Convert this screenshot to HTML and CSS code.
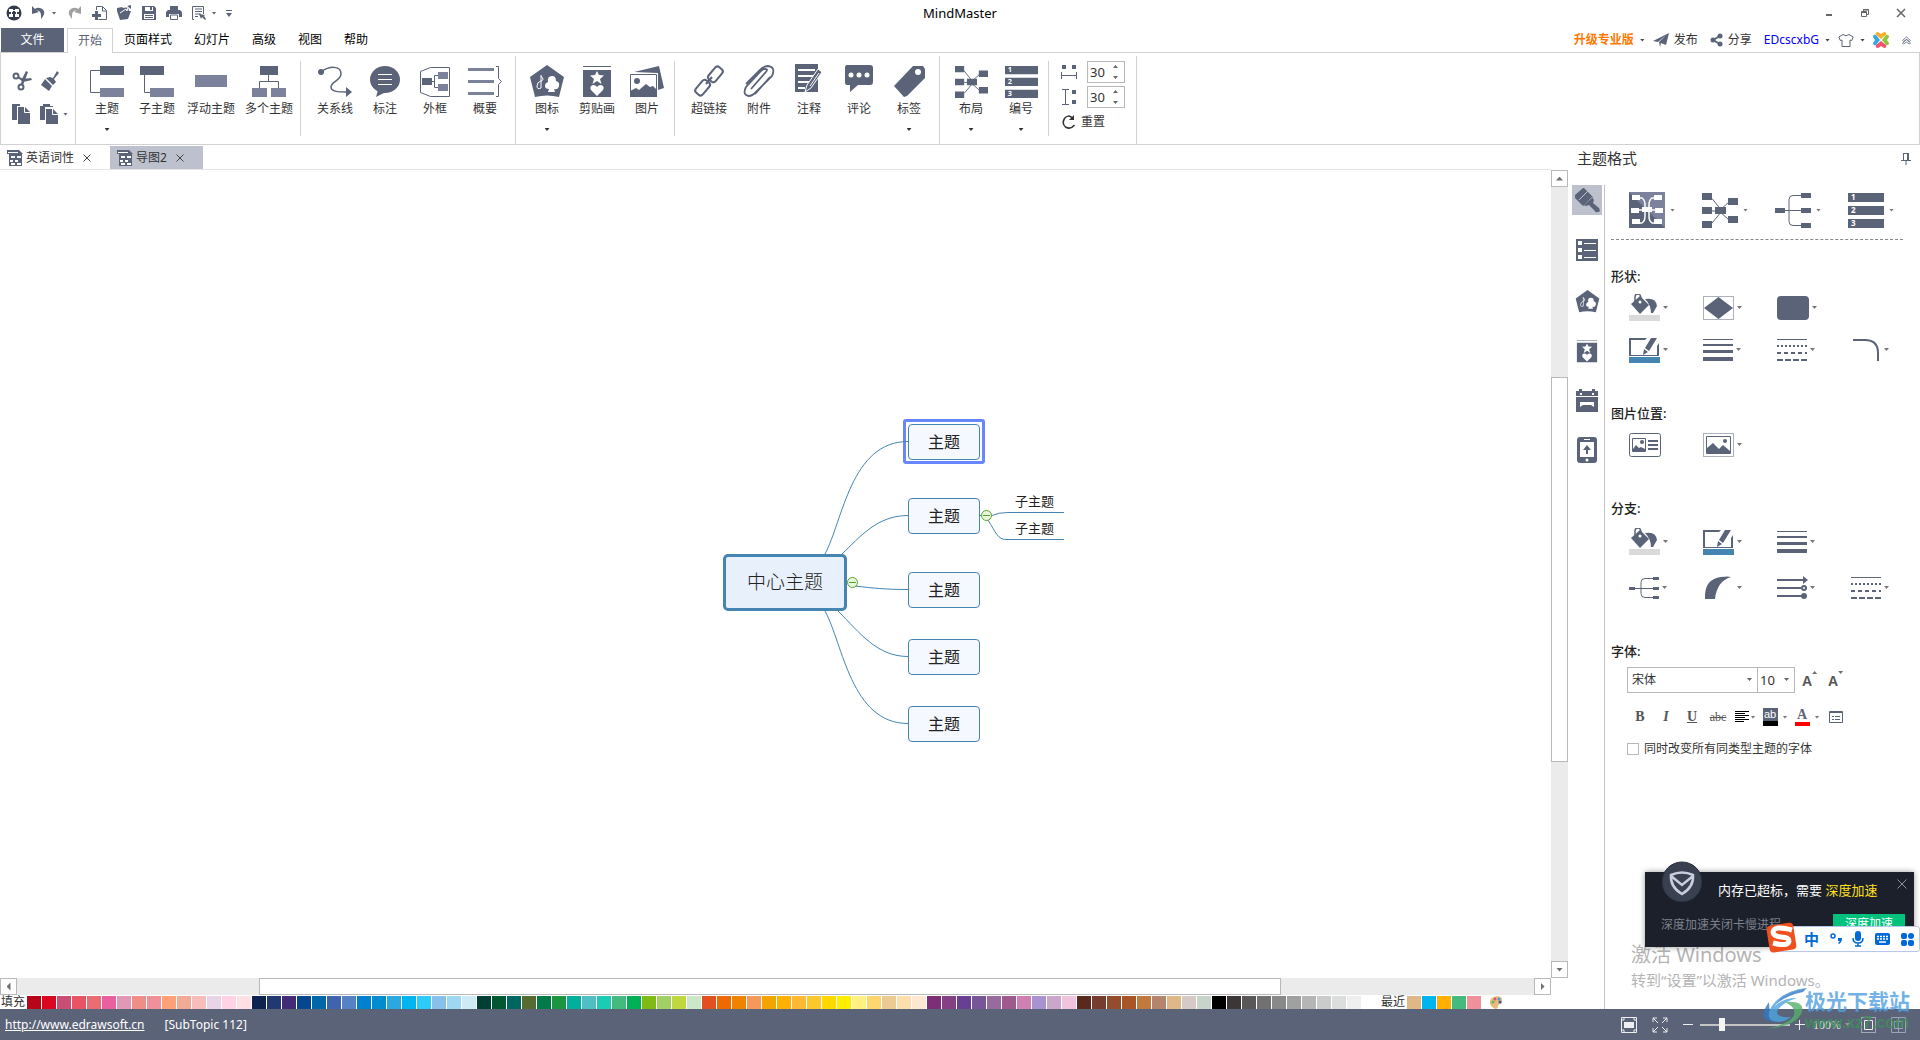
FILE: index.html
```html
<!DOCTYPE html>
<html lang="zh-CN">
<head>
<meta charset="utf-8">
<title>MindMaster</title>
<link rel="stylesheet" href="styles.css">
</head>
<body>
<svg class="defs" aria-hidden="true">
  <symbol id="layout" viewBox="0 0 36 36"><path d="M10 6.500L20 19M10 19h10M10 31L20 19M27 10L17 19M27 28L17 19" fill="none" stroke="currentColor"/><path d="M0 1h10v7H0zM0 15h10v7H0zM0 29h10v7H0zM26 6h10v7H26zM26 24h10v7H26zM13 15h11v7H13z"/></symbol>
  <symbol id="number" viewBox="0 0 36 36"><path d="M0 1h36v9H0zM0 14h36v9H0zM0 27h36v9H0z"/><g fill="#fff" font-size="8" font-weight="700"><text x="3" y="8">1</text><text x="3" y="21">2</text><text x="3" y="34">3</text></g></symbol>
  <symbol id="badge" viewBox="0 0 36 36"><path d="M18 3L35 15L30 35Q18 32 6 35L1 15z"/><path d="M12 13v13q-4 2-4-2 0-4 4-5t0-5" fill="none" stroke="#fff"/><path d="M23 14q4 0 4 5 4 1 3 5t-5 3l1 3h-7l1-3q-4 0-4-3t3-4q-1-6 4-6z" fill="#fff"/></symbol>
  <symbol id="clipart" viewBox="0 0 36 36"><path d="M4 4h28v1H4zM4 8h28v27H4z"/><path d="M18 9l2 4 5 .5-4 3.500 1.500 5L18 19l-4.500 3 1.500-5-4-3.500 5-.5zM18 34l-6-6q-2-4 2-5 3 0 4 2 1-2 4-2 4 1 2 5z" fill="#fff"/></symbol>
  <symbol id="bucket" viewBox="0 0 31 27"><path d="M2 10L11 2l9 9-9 9z"/><path d="M6 7V3q0-3 3-3t3 5v4" fill="none" stroke="currentColor" stroke-width="1.500"/><circle cx="11" cy="8" r="1.500" fill="#fff"/><path d="M16 5q11-2 12 7l-4 7-2 0q0-8-6-14z"/><path d="M0 21h31v6H0z" fill="#dadada"/></symbol>
  <symbol id="pen" viewBox="0 0 31 26"><path d="M0 1h18l-2 2H2v15h26V9l2-3v13H0z"/><path d="M22 1h6l-8 13-4-3zM15 12l4 3-5 3z"/><path d="M0 20h31v6H0z" fill="#4585b2"/></symbol>
  <symbol id="weights" viewBox="0 0 30 24"><path d="M0 1h30v1H0zM0 6h30v2H0zM0 12h30v3H0zM0 19h30v4H0z"/></symbol>
  <symbol id="dashes" viewBox="0 0 30 24"><path d="M0 1h30v1H0z"/><path d="M0 8h30" stroke="currentColor" stroke-width="2" stroke-dasharray="2"/><path d="M0 15h30" stroke="currentColor" stroke-width="2" stroke-dasharray="4 3"/><path d="M0 22h30" stroke="currentColor" stroke-width="2" stroke-dasharray="6 2"/></symbol>
  <symbol id="branch" viewBox="0 0 36 36"><path d="M0 18.500h30M26 3.500H18q-4 0-4 4v22q0 4 4 4h8" fill="none" stroke="currentColor"/><path d="M0 16h10v5H0zM26 1h10v5H26zM26 16h10v5H26zM26 31h10v5H26z"/></symbol>
  <symbol id="doc" viewBox="0 0 16 16"><path d="M0 0h12v4H0zM2 4h13v12H2zM12 0l4 4h-4z"/><path d="M1 2h10v1H1zM4 6h4v2H4zM10 6h4v2h-4zM3 10h3v2H3zM8 10h3v2H8zM4 13h4v2H4zM10 13h4v2h-4z" fill="#fff"/></symbol>
</svg>

<header class="titlebar">
  <div class="quick">
    <button class="tool w16" aria-label="MindMaster"><svg width="16" height="16"><circle cx="8" cy="8" r="7.500" fill="#353b4c"/><path d="M3 4h4v3H3zM9 4h4v3H9zM3 9h4v3H3zM9 9h4v3H9zM5 7h1v2H5zM10 7h1v2h-1zM7 5h2v1H7z" fill="#fff"/></svg></button>
    <button class="tool w16" aria-label="撤销"><svg width="16" height="16"><path d="M1 1v8l7-2-2.500-1.500Q11 5 10 14q7-8-1-11Q6 2 4 4z"/></svg></button>
    <button class="tool w8" aria-label="撤销列表"><i class="caret"></i></button>
    <button class="tool w16 off" aria-label="重做"><svg width="16" height="16"><path d="M15 1v8L8 7l2.500-1.500Q5 5 6 14-1 6 7 3q3-1 5 1z"/></svg></button>
    <button class="tool w16" aria-label="新建"><svg width="16" height="16"><path d="M5.500 5V1.500h6l4 4v9h-8M11.500 2v4h4" fill="none" stroke="currentColor"/><path d="M4 6h3v3h3v3H7v3H4v-3H1V9h3z"/></svg></button>
    <button class="tool w16" aria-label="打开"><svg width="16" height="16"><path d="M1 3l5-1 1 1 5-1 1 4 2 0-3 8-8 1L1 6zM11 1l4-1v4z"/><path d="M4 8l6-4 1 2 1-4-4-.5" fill="none" stroke="#fff"/></svg></button>
    <button class="tool w16" aria-label="保存"><svg width="16" height="16"><path d="M1 1h12l2 2v12H1z"/><path d="M4 2h8v4H4zM3 9h10v5H3z" fill="#fff"/><path d="M9 2h2v3H9zM4 10h8v1H4zM4 12h8v1H4z"/></svg></button>
    <button class="tool w16" aria-label="打印"><svg width="16" height="16"><path d="M4 1h8v4h2l2 2v5h-3V9H3v3H0V7l2-2h2z"/><path d="M4.500 10h7v4.500h-7z" fill="#fff" stroke="currentColor"/></svg></button>
    <button class="tool w16" aria-label="导出"><svg width="16" height="16"><path d="M3 14.500H1.500v-13h11V9M4 4h7M4 6.500h7M4 9h6M4 11.500h3" fill="none" stroke="currentColor"/><path d="M8 9l6 1-1 1 2 3-1 1-3-3-1 2z"/></svg></button>
    <button class="tool w8" aria-label="导出列表"><i class="caret"></i></button>
    <button class="tool" aria-label="自定义"><svg width="6" height="7"><path d="M0 0h6v1H0zM0 3h6L3 7z"/></svg></button>
  </div>
  <h1>MindMaster</h1>
  <div class="window">
    <button aria-label="最小化"><svg width="10" height="10"><path d="M2 6h6v2H2z"/></svg></button>
    <button aria-label="还原"><svg width="10" height="10"><path d="M3.500 3V1.500h5v5H7M1.500 3.500h5v5h-5zM1 4.500h6M3 2h6" fill="none" stroke="currentColor"/></svg></button>
    <button aria-label="关闭"><svg width="10" height="10"><path d="M1 1l8 8M9 1l-8 8" stroke="currentColor" stroke-width="1.500"/></svg></button>
  </div>
</header>

<nav class="menubar">
  <button class="file">文件</button>
  <button class="tab active">开始</button>
  <button class="tab">页面样式</button>
  <button class="tab">幻灯片</button>
  <button class="tab">高级</button>
  <button class="tab">视图</button>
  <button class="tab">帮助</button>
  <div class="account">
    <button class="upgrade">升级专业版</button><i class="caret"></i>
    <button><svg width="16" height="16"><path d="M0 9L16 1l-3 12-5-2-1 4-1-5 7-7-8 7z"/></svg>发布</button>
    <button><svg width="13" height="14"><path d="M10 3L3 7l7 4" fill="none" stroke="currentColor" stroke-width="2"/><circle cx="10" cy="3" r="2.500"/><circle cx="3" cy="7" r="2.500"/><circle cx="10" cy="11" r="2.500"/></svg>分享</button>
    <a href="#account">EDcscxbG</a><i class="caret"></i>
    <button aria-label="皮肤"><svg width="16" height="14"><path d="M5 1.500L.8 4l1.500 3.500L4 7v6.500h8V7l1.700.5L15.200 4 11 1.500Q8 4 5 1.500z" fill="none" stroke="currentColor"/></svg></button><i class="caret"></i>
    <button aria-label="社区"><svg width="16" height="16"><path d="M8 7L3 3Q2 0 5 0l3 2 3-2q3 0 2 3z" fill="#fbb02d"/><path d="M9 8l4-5q3-1 3 2l-2 3 2 3q0 3-3 2z" fill="#8cc63f"/><path d="M8 9l5 4q1 3-2 3l-3-2-3 2q-3 0-2-3z" fill="#f4506c"/><path d="M7 8L3 3Q0 2 0 5l2 3-2 3q0 3 3 2z" fill="#35a8e0"/></svg></button>
    <button aria-label="收起功能区"><svg width="11" height="9"><path d="M1.500 4.500l4-3.500 4 3.500-1 1-3-2-3 2zM1.500 7l4-3.500 4 3.500-1 1-3-2-3 2z" fill="none" stroke="currentColor" stroke-width=".8"/></svg></button>
  </div>
</nav>

<section class="ribbon">
  <div class="group clip">
    <button class="tool" aria-label="剪切"><svg width="20" height="20"><circle cx="4" cy="5" r="2.500" fill="none" stroke="currentColor" stroke-width="2"/><circle cx="9" cy="16" r="2.500" fill="none" stroke="currentColor" stroke-width="2"/><path d="M6 5l5 3 8-1 1 2-9 2-5-4zM9 13l1-5 4-8 2 1-3 8-2 5z"/></svg></button>
    <button class="tool" aria-label="格式刷"><svg width="20" height="20"><path d="M17 0l2 2-5 6 2 3-3 3-7-7 4-1 3 1zM5 8l7 7-3 5-8-6z"/></svg></button>
    <button class="tool" aria-label="复制"><svg width="20" height="20"><path d="M0 0h8v2H5v14H0z"/><path d="M6 3h7l5 5v12H6z"/><path d="M12.500 3v5.500H18" fill="none" stroke="#fff"/></svg></button>
    <button class="tool paste" aria-label="粘贴"><svg width="20" height="20"><path d="M0 2h3V0h7v2h3v1H5v13H0z"/><path d="M6 5h7l5 5v10H6z"/><path d="M12.500 5v5.500H18" fill="none" stroke="#fff"/></svg><i class="caret"></i></button>
  </div>
  <div class="group tight">
    <button class="cmd"><svg viewBox="0 0 36 36"><path d="M11 8.500H1.500v22H11" fill="none" stroke="currentColor"/><path d="M11 4h24v9H11z"/><path class="lt" d="M11 26h24v9H11z"/></svg>主题<i class="caret"></i></button>
    <button class="cmd"><svg viewBox="0 0 36 36"><path d="M5.500 13v17.500H11" fill="none" stroke="currentColor"/><path d="M1 4h24v9H1z"/><path class="lt" d="M11 26h24v9H11z"/></svg>子主题</button>
    <button class="cmd wide"><svg viewBox="0 0 36 36"><path class="lt" d="M2 13h32v12H2z"/></svg>浮动主题</button>
    <button class="cmd wide"><svg viewBox="0 0 36 36"><path d="M17.500 13v6M8.500 26v-6.500h19V26" fill="none" stroke="currentColor"/><path d="M9 4h18v9H9z"/><path class="lt" d="M1 26h15v9H1zM20 26h15v9H20z"/></svg>多个主题</button>
  </div>
  <i class="rule"></i>
  <div class="group end">
    <button class="cmd"><svg viewBox="0 0 36 36"><path d="M4 10C12 4 24 3 24 12 24 18 14 20 14 25 14 30 22 30 30 30" fill="none" stroke="currentColor" stroke-width="1.500"/><circle cx="4" cy="10" r="3"/><path d="M29 25l6 5-6 5z"/></svg>关系线</button>
    <button class="cmd"><svg viewBox="0 0 36 36"><ellipse cx="18" cy="17.500" rx="15" ry="13.500"/><path d="M11 28L9 35l12-6z"/><path d="M11 12.500h14M11 17.500h14M11 22.500h14" stroke="#fff"/></svg>标注</button>
    <button class="cmd"><svg viewBox="0 0 36 36"><path d="M3.500 9.500l10-4h19v29h-19l-10-4zM14 19.500h3.500M21 13.500h-3.500v12H21" fill="none" stroke="currentColor"/><path d="M5 16h10v7H5z"/><path class="lt" d="M21 10h10v7H21zM21 22h10v7H21z"/></svg>外框</button>
    <button class="cmd"><svg viewBox="0 0 36 36"><path class="lt" d="M1 6h26v3H1zM1 18h26v3H1zM1 30h26v3H1z"/><path d="M29 4.500h2.500v12l3 3-3 3v12H29" fill="none" stroke="currentColor"/></svg>概要</button>
  </div>
  <div class="group tight">
    <button class="cmd"><svg><use href="#badge"/></svg>图标<i class="caret"></i></button>
    <button class="cmd"><svg><use href="#clipart"/></svg>剪贴画</button>
    <button class="cmd"><svg viewBox="0 0 36 36"><path d="M5 10l25-6 5 22-6 2V11z"/><path d="M1.500 12.500h26v22h-26z" fill="#fff" stroke="currentColor"/><path d="M1 29l6-3 3 2 7-6 4 3 3-1 4 4v7H1z"/><circle cx="8" cy="19" r="3"/></svg>图片</button>
  </div>
  <i class="rule"></i>
  <div class="group end">
    <button class="cmd"><svg viewBox="0 0 36 36"><g fill="none" stroke="currentColor" stroke-width="2"><rect x="-8" y="-4" width="16" height="9" rx="3" transform="translate(24 12) rotate(-50)"/><rect x="-8" y="-5" width="16" height="9" rx="3" transform="translate(12 26) rotate(-50)"/><path d="M15 22l6-7"/></g></svg>超链接</button>
    <button class="cmd"><svg viewBox="0 0 36 36"><path d="M10 27L24 11q4-4 0-4-2 0-4 2L5 25q-4 8 3 9 3 0 7-4L31 14q4-9-4-10-4 0-8 4L5 22M14 32L29 15" fill="none" stroke="currentColor" stroke-width="1.800"/></svg>附件</button>
    <button class="cmd"><svg viewBox="0 0 36 36"><path d="M4 2h23v28H4z"/><path d="M7 8h17M7 14h15M7 20h11M7 26h7" stroke="#fff" stroke-width="2"/><path d="M27 7l4 3-11 16-6 4 2-7z" stroke="#fff"/><path d="M19 24l9-13" stroke="#fff"/></svg>注释</button>
    <button class="cmd"><svg viewBox="0 0 36 36"><path d="M6 3h23q3 0 3 3v14q0 3-3 3H17l-8 7v-7H6q-2 0-2-3V6q0-3 2-3z"/><g fill="#fff"><circle cx="10" cy="13" r="2.500"/><circle cx="18" cy="13" r="2.500"/><circle cx="26" cy="13" r="2.500"/></g></svg>评论</button>
    <button class="cmd"><svg viewBox="0 0 36 36"><path d="M22 4h10l2 3v9L16 34l-3 1L3 24z"/><circle cx="27" cy="10" r="3" fill="#fff"/></svg>标签<i class="caret"></i></button>
  </div>
  <div class="group tight">
    <button class="cmd"><svg class="inset"><use href="#layout"/></svg>布局<i class="caret"></i></button>
    <button class="cmd"><svg class="inset"><use href="#number"/></svg>编号<i class="caret"></i></button>
  </div>
  <i class="rule"></i>
  <div class="group spacing">
    <label class="spin"><svg width="16" height="16"><path d="M1 1h4v4H1zM11 1h4v4h-4z"/><path d="M.5 8v7M15.500 8v7M1 11.500h14" stroke="currentColor"/></svg><span class="box"><input type="text" value="30" aria-label="水平间距"></span></label>
    <label class="spin"><svg width="16" height="16"><path d="M1 .5h7M1 15.500h7M4.500 1v14" stroke="currentColor"/><path d="M11 1h4v4h-4zM11 11h4v4h-4z"/></svg><span class="box"><input type="text" value="30" aria-label="垂直间距"></span></label>
    <button class="reset"><svg width="16" height="16"><path d="M11.500 4Q7 0 3.500 4.500q-3 5 1 8.500 5 3 9-2" fill="none" stroke="currentColor" stroke-width="1.500"/><path d="M13 1v5H8z"/></svg>重置</button>
  </div>
</section>

<main class="workspace">
  <div class="editor">
    <div class="doctabs">
      <div class="doctab"><svg width="16" height="16"><use href="#doc"/></svg>英语词性<button aria-label="关闭 英语词性"><svg width="8" height="8"><path d="M.5.5l7 7M7.500.5l-7 7" stroke="currentColor"/></svg></button></div>
      <div class="doctab active"><svg width="16" height="16"><use href="#doc"/></svg>导图2<button aria-label="关闭 导图2"><svg width="8" height="8"><path d="M.5.5l7 7M7.500.5l-7 7" stroke="currentColor"/></svg></button></div>
    </div>
    <div class="stage">
      <div class="canvas">
        <div class="map">
          <div class="selection"></div>
          <svg class="links" width="345" height="325" viewBox="722 419 345 325"><g fill="none" stroke="#4585b2"><path d="M825 554C843 520 851 441.500 908 441.500M842 554C860 537 877 515.500 908 515.500M855 586C872 588 885 589.500 908 589.500M838 611C860 633 877 656.500 908 656.500M825 611C843 644 851 723.500 908 723.500M980 515.500H992Q998 512.500 1008 512.500H1064M988 520C996 533 998 539.500 1006 539.500H1064"/></g><g fill="#e9f7df" stroke="#57a52b"><circle cx="986.500" cy="515.500" r="5"/><circle cx="852.500" cy="582.500" r="5"/><path d="M983 515.500h7M849 582.500h7"/></g></svg>
          <div class="node root">中心主题</div>
          <div class="node n1">主题</div>
          <div class="node n2">主题</div>
          <div class="node n3">主题</div>
          <div class="node n4">主题</div>
          <div class="node n5">主题</div>
          <div class="sub s1">子主题</div>
          <div class="sub s2">子主题</div>
        </div>
      </div>
      <div class="vscroll"><button aria-label="向上"><i class="up"></i></button><div class="vtrack"><div class="vthumb"></div></div><button aria-label="向下"><i class="down"></i></button></div>
    </div>
    <div class="hscroll"><button aria-label="向左"><i class="left"></i></button><div class="htrack"><div class="hthumb"></div></div><button aria-label="向右"><i class="right"></i></button></div>
    <div class="palette">
      <span class="name">填充</span>
      <div class="swatches">
        <i style="background:#b80618"></i><i style="background:#db0720"></i><i style="background:#c84e74"></i><i style="background:#e95464"></i><i style="background:#ec6d71"></i><i style="background:#ea609e"></i><i style="background:#e198b4"></i><i style="background:#ee8e87"></i><i style="background:#f0909a"></i><i style="background:#ffa078"></i><i style="background:#f0aa96"></i><i style="background:#f6bdbb"></i><i style="background:#e8d4e6"></i><i style="background:#ffd3e4"></i><i style="background:#ffdfe4"></i>
        <i style="background:#0e2350"></i><i style="background:#213970"></i><i style="background:#422c78"></i><i style="background:#06468e"></i><i style="background:#0068a8"></i><i style="background:#3f63af"></i><i style="background:#5482c4"></i><i style="background:#0081d0"></i><i style="background:#008cd0"></i><i style="background:#2ca8e0"></i><i style="background:#00b4f0"></i><i style="background:#2ecafa"></i><i style="background:#88c0ec"></i><i style="background:#9ed8f0"></i><i style="background:#ceeaf5"></i>
        <i style="background:#004034"></i><i style="background:#005830"></i><i style="background:#006662"></i><i style="background:#556b2f"></i><i style="background:#007a46"></i><i style="background:#1c9440"></i><i style="background:#00b09c"></i><i style="background:#50bfc3"></i><i style="background:#1accb4"></i><i style="background:#44ba7e"></i><i style="background:#00b054"></i><i style="background:#80ba14"></i><i style="background:#a2d064"></i><i style="background:#bfd840"></i><i style="background:#cce6c8"></i>
        <i style="background:#e24f20"></i><i style="background:#ee6a00"></i><i style="background:#f08200"></i><i style="background:#f6985a"></i><i style="background:#f2a400"></i><i style="background:#ffb000"></i><i style="background:#ffb834"></i><i style="background:#fac82c"></i><i style="background:#ffd800"></i><i style="background:#ffee00"></i><i style="background:#fff280"></i><i style="background:#ffd56e"></i><i style="background:#ebca94"></i><i style="background:#ffdead"></i><i style="background:#fce8d0"></i>
        <i style="background:#7c2f76"></i><i style="background:#854085"></i><i style="background:#693f94"></i><i style="background:#785498"></i><i style="background:#986a9e"></i><i style="background:#a0598c"></i><i style="background:#d07fb2"></i><i style="background:#a992d0"></i><i style="background:#caa6cb"></i><i style="background:#efc4dc"></i>
        <i style="background:#592a1c"></i><i style="background:#773c30"></i><i style="background:#934d2a"></i><i style="background:#a85628"></i><i style="background:#c1793e"></i><i style="background:#b5846c"></i><i style="background:#deb887"></i><i style="background:#d5cac5"></i><i style="background:#c8d4ca"></i>
        <i style="background:#000"></i><i style="background:#3c3637"></i><i style="background:#595757"></i><i style="background:#717171"></i><i style="background:#898989"></i><i style="background:#9fa0a0"></i><i style="background:#b5b5b6"></i><i style="background:#cacccb"></i><i style="background:#dcdddd"></i><i style="background:#efefef"></i>
      </div>
      <span class="name recent">最近</span>
      <div class="swatches"><i style="background:#deb887"></i><i style="background:#00b4f0"></i><i style="background:#ffb000"></i><i style="background:#44ba7e"></i><i style="background:#f0909a"></i></div>
      <button class="more" aria-label="更多颜色"><svg width="14" height="14"><path d="M8 1q6 0 5 6-1 3-3 2l-1 2q0 3-3 3-3-1-5-5Q0 2 8 1z" fill="#e8bd7c"/><circle cx="6" cy="4" r="1.500" fill="#e0526a"/><circle cx="10" cy="4" r="1.500" fill="#3c9edb"/><circle cx="11" cy="7" r="1.500" fill="#3d57a8"/><circle cx="4" cy="7" r="1.500" fill="#5fb760"/></svg></button>
    </div>
  </div>

  <aside class="panel">
    <div class="phead"><h2>主题格式</h2><button aria-label="固定"><svg width="10" height="12"><path d="M2 .5h6M2.500 1v6M6.500 1v6M7.500 1v6M0 7.500h10M5 8v4" stroke="currentColor"/></svg></button></div>
    <div class="pbody">
      <div class="side">
        <button class="active" aria-label="格式"><svg width="26" height="26" viewBox="0 0 26 26"><path d="M9 1L1 8v3l8 8 10-9-9-9zM10 18l8-8 2 3-1 3 6 5q2 4-1 4-3 1-4-2l-5-5-3 1z"/><path d="M14 4l-9 9" stroke="#bdc1cd"/></svg></button>
        <button aria-label="大纲"><svg width="22" height="22"><path d="M0 0h22v22H0z"/><path d="M2 2h4v4H2zM2 9h4v4H2zM2 16h4v4H2zM8 4h12v1H8zM8 11h12v1H8zM8 18h12v1H8z" fill="#fff"/></svg></button>
        <button aria-label="图标"><svg width="25" height="25"><use href="#badge"/></svg></button>
        <button aria-label="剪贴画"><svg width="26" height="26"><use href="#clipart"/></svg></button>
        <button aria-label="日程"><svg width="22" height="23"><path d="M3 0h3v2h10V0h3v2h3v5H0V2h3zM0 8h22v15H0z"/><path d="M4 13h14v5l-3-2H7l-3 2zM4 4h2v2H4zM16 4h2v2h-2z" fill="#fff"/></svg></button>
        <button aria-label="分享"><svg width="20" height="26"><rect width="20" height="26" rx="3"/><path d="M3 5h14v15H3zM7 2h6v1H7z" fill="#fff"/><circle cx="10" cy="23" r="1.500" fill="#fff"/><path d="M10 8l4 5h-3v4H9v-4H6z"/></svg></button>
      </div>
      <div class="props">
        <div class="styles">
          <button><svg width="36" height="36"><path class="lt" d="M0 0h36v36H0z"/><path d="M0 0l18 18 18 18H0z"/><path d="M10 6h3q3 2 3 7v11q0 5-3 7h-3M26 6h-3q-3 2-3 7v11q0 5 3 7h3M4 18h28" fill="none" stroke="#fff" stroke-width="1.500"/><path d="M3 3h8v5H3zM2 16h8v5H2zM3 27h8v5H3zM25 3h8v5h-8zM26 16h8v5h-8zM25 27h8v5h-8zM13 15h10v5H13z" fill="#fff"/></svg><i class="caret"></i></button>
          <button><svg width="36" height="36"><use href="#layout"/></svg><i class="caret"></i></button>
          <button><svg width="36" height="36"><use href="#branch"/></svg><i class="caret"></i></button>
          <button><svg width="36" height="36"><use href="#number"/></svg><i class="caret"></i></button>
        </div>
        <h3>形状:</h3>
        <div class="opts">
          <button><svg width="31" height="27"><use href="#bucket"/></svg><i class="caret"></i></button>
          <button><svg width="31" height="24"><path d="M.5.5h30v23H.5z" fill="none" stroke="currentColor" stroke-dasharray="1 1"/><path d="M1 12L15.500 1 30 12 15.500 23z"/></svg><i class="caret"></i></button>
          <button><svg width="32" height="24"><rect width="32" height="24" rx="4"/></svg><i class="caret"></i></button>
          <span></span>
          <button><svg width="31" height="26"><use href="#pen"/></svg><i class="caret"></i></button>
          <button><svg width="30" height="24"><use href="#weights"/></svg><i class="caret"></i></button>
          <button><svg width="30" height="24"><use href="#dashes"/></svg><i class="caret"></i></button>
          <button><svg width="30" height="24"><path d="M2 2h12q13 0 13 13v8" fill="none" stroke="currentColor" stroke-width="2"/></svg><i class="caret"></i></button>
        </div>
        <h3>图片位置:</h3>
        <div class="opts">
          <button><svg width="32" height="24"><rect x=".5" y=".5" width="31" height="23" rx="2" fill="none" stroke="currentColor"/><path d="M3.500 5.500h13v13h-13z" fill="none" stroke="currentColor"/><path d="M4 16l3-4 3 3 2-1 4 2v2H4zM19 7h10v2H19zM19 11h10v2H19zM19 15h10v2H19z"/><circle cx="13" cy="9" r="2"/></svg></button>
          <button><svg width="31" height="24"><path d="M.5.5h30v23H.5z" fill="none" stroke="currentColor" stroke-dasharray="1 1"/><path d="M3.500 3.500h24v17h-24z" fill="none" stroke="currentColor"/><path d="M4 15l6-5 6 6 4-4 7 6v3H4z"/><circle cx="22" cy="8" r="2"/></svg><i class="caret"></i></button>
        </div>
        <h3>分支:</h3>
        <div class="opts loose">
          <button><svg width="31" height="27"><use href="#bucket"/></svg><i class="caret"></i></button>
          <button><svg width="31" height="26"><use href="#pen"/></svg><i class="caret"></i></button>
          <button><svg width="30" height="24"><use href="#weights"/></svg><i class="caret"></i></button>
          <span></span>
          <button><svg width="30" height="24"><path d="M0 12.500h26M24 2.500h-8q-4 0-4 4v11q0 4 4 4h8" fill="none" stroke="currentColor"/><path d="M0 11h6v3H0zM24 1h6v3h-6zM24 11h6v3h-6zM24 20h6v3h-6z"/></svg><i class="caret"></i></button>
          <button><svg width="31" height="24"><path d="M2 23Q1 3 18 1q7-1 10 0Q14 5 12 23z"/></svg><i class="caret"></i></button>
          <button><svg width="30" height="24"><path d="M0 4h26M0 12h24M0 20h26" stroke="currentColor" stroke-width="2"/><path d="M26 0l5 4-5 4z"/><circle cx="27" cy="12" r="2" fill="#fff" stroke="currentColor" stroke-width="2"/><circle cx="27" cy="20" r="3"/></svg><i class="caret"></i></button>
          <button><svg width="30" height="24"><use href="#dashes"/></svg><i class="caret"></i></button>
        </div>
        <h3>字体:</h3>
        <div class="fontrow">
          <span class="pick family"><select aria-label="字体"><option>宋体</option></select></span>
          <span class="pick size"><select aria-label="字号"><option>10</option></select></span>
          <button class="grow" aria-label="增大字号">A<i class="up"></i></button>
          <button class="grow" aria-label="减小字号">A<i class="down"></i></button>
        </div>
        <div class="fmt">
          <button><b>B</b></button>
          <button><b><em>I</em></b></button>
          <button><b><u>U</u></b></button>
          <button class="strike"><s>abc</s></button>
          <button class="al"><svg width="14" height="12"><path d="M0 .5h14M0 2.500h10M0 4.500h14M0 6.500h10M0 8.500h14M0 10.500h9" stroke="#000"/></svg><i class="caret"></i></button>
          <button class="hl"><span>ab</span><i class="caret"></i></button>
          <button class="fc"><span>A</span><i class="caret"></i></button>
          <button><svg width="14" height="12"><path d="M.5.5h13v11H.5zM1 1.500h12M6 5.500h5M6 8.500h5M3 5.500h2M3 8.500h2" fill="none" stroke="currentColor"/></svg></button>
        </div>
        <label class="check"><input type="checkbox">同时改变所有同类型主题的字体</label>
      </div>
    </div>
  </aside>
</main>

<footer class="status">
  <a href="http://www.edrawsoft.cn">http://www.edrawsoft.cn</a>
  <span class="info">[SubTopic 112]</span>
  <div class="zoom">
    <button aria-label="适合窗口"><svg width="16" height="16"><path d="M.5.500h15v15H.5z" fill="none" stroke="currentColor"/><path d="M3 5h10v6H3z"/><path d="M2 4V2h2M12 2h2v2M14 12v2h-2M4 14H2v-2" fill="none" stroke="currentColor"/></svg></button>
    <button aria-label="全屏"><svg width="16" height="16"><path d="M1 5V1h4M11 1h4v4M15 11v4h-4M5 15H1v-4M1 1l5 5M15 1l-5 5M15 15l-5-5M1 15l5-5" fill="none" stroke="currentColor"/></svg></button>
    <button aria-label="缩小"><svg width="10" height="10"><path d="M0 4h10v1H0z"/></svg></button>
    <input type="range" min="0" max="100" value="23" aria-label="缩放">
    <button aria-label="放大"><svg width="10" height="10"><path d="M0 4h10v1H0zM4 0h1v10H4z"/></svg></button>
    <button class="pct">100%<i class="caret"></i></button>
    <button aria-label="适合页面"><svg width="15" height="16"><path d="M.5.500h14v15H.5z" fill="none" stroke="currentColor" stroke-dasharray="1 1"/><path d="M3.500 3.500h8v9h-8z" fill="none" stroke="currentColor"/></svg></button>
    <button class="dim" aria-label="居中"><svg width="15" height="16"><path d="M.5.500h14v15H.5zM3.500 4.500h8v7h-8zM7.500 1v14" fill="none" stroke="currentColor"/></svg></button>
  </div>
</footer>

<div class="activate"><p class="big">激活 Windows</p><p>转到“设置”以激活 Windows。</p></div>

<div class="toast">
  <svg class="shield" width="42" height="42"><circle cx="21" cy="21" r="20" fill="#39404f" stroke="#252b38"/><path d="M10 14q11-5 22 0 1 12-11 19Q9 26 10 14zM10 15l11 9 11-9" fill="none" stroke="#c9cddd" stroke-width="2.500"/></svg>
  <button class="x" aria-label="关闭提醒"><svg width="10" height="10"><path d="M.5.500l9 9M9.500.500l-9 9" stroke="currentColor"/></svg></button>
  <p class="msg">内存已超标，需要 <em>深度加速</em></p>
  <div class="act"><span>深度加速关闭卡慢进程</span><button>深度加速</button></div>
</div>

<div class="ime">
  <svg class="sogou" width="32" height="32"><rect x="2" y="2" width="27" height="27" rx="4" fill="#f0501e" transform="rotate(-9 16 16)"/><path d="M26 8Q8 3 7 10q0 4 8 5 8 0 8 4-1 6-16 2" fill="none" stroke="#fff" stroke-width="5"/></svg>
  <button>中</button>
  <button aria-label="标点"><svg width="12" height="12"><circle cx="3" cy="3" r="2" fill="none" stroke="currentColor" stroke-width="1.500"/><path d="M8 5h4q0 4-3 6l-1-1 2-2H8z"/></svg></button>
  <button aria-label="语音"><svg width="12" height="16"><rect x="3" width="6" height="10" rx="3"/><path d="M1 7q0 5 5 5t5-5M6 12v3M3 15h6" fill="none" stroke="currentColor" stroke-width="1.500"/></svg></button>
  <button aria-label="键盘"><svg width="15" height="12"><rect width="15" height="12" rx="2"/><path d="M2 3.500h11M2 6h11" stroke="#fff" stroke-width="1.500" stroke-dasharray="2 1"/><path d="M4 9h7" stroke="#fff" stroke-width="1.500"/></svg></button>
  <button aria-label="工具箱"><svg width="13" height="13"><rect width="6" height="6" rx="2"/><rect x="7" width="6" height="6" rx="3"/><rect y="7" width="6" height="6" rx="2"/><rect x="7" y="7" width="6" height="6" rx="2"/></svg></button>
</div>

<div class="brand">
  <svg width="46" height="42"><path d="M44 0Q16 4 9 20 20 8 40 4zM6 14Q-4 28 4 32q8 4 14 0Q6 32 6 14z" fill="#3278c8"/><path d="M44 0Q16 6 12 18q8-8 22-8-18 6-20 14 0 6 14 5-10 8-20 3Q2 26 12 14 24 2 44 0z" fill="#4ea4e0"/><path d="M22 14q22-2 16 12Q32 38 4 41q24-6 27-14 2-8-9-13z" fill="#56b06a"/></svg>
  <div><strong>极光下载站</strong><span>www.xz7.com</span></div>
</div>
</body>
</html>
```
FILE: styles.css
```css
* { box-sizing: border-box; }
body {
  margin: 0; height: 100vh; overflow: hidden; position: relative;
  display: flex; flex-direction: column;
  font: 12px/16px "Noto Sans", "Noto Sans CJK SC", sans-serif;
  color: #333; background: #fff;
}
h1, h2, h3, p { margin: 0; font-size: inherit; font-weight: 400; }
button { border: 0; padding: 0; background: none; font: inherit; color: inherit; }
svg { display: block; fill: currentColor; overflow: visible; flex: none; }
.defs { position: absolute; width: 0; height: 0; }
.lt { fill: #7c829b; }
.caret { flex: none; width: 5px; height: 3px; background: currentColor; clip-path: polygon(0 0, 100% 0, 50% 100%); }
.up, .down { width: 7px; height: 4px; background: #707070; clip-path: polygon(0 0, 100% 0, 50% 100%); }
.up { clip-path: polygon(0 100%, 100% 100%, 50% 0); }
.left, .right { width: 4px; height: 8px; background: #707070; clip-path: polygon(100% 0, 100% 100%, 0 50%); }
.right { clip-path: polygon(0 0, 0 100%, 100% 50%); }

.titlebar { display: grid; grid-template-columns: 1fr auto 1fr; align-items: center; height: 28px; padding-bottom: 2px; color: #000; }
.titlebar h1 { font-size: 13px; }
.quick { display: flex; align-items: center; gap: 9px; padding-left: 6px; color: #5b6378; }
.quick .tool { display: grid; place-items: center; }
.quick .w16 { width: 16px; height: 16px; }
.quick .w8 { width: 6px; height: 16px; margin-left: -5px; }
.quick .off { color: #a0a0a0; }
.window { display: flex; justify-content: flex-end; gap: 26px; padding-right: 14px; color: #666; }

.menubar { display: flex; align-items: flex-end; height: 25px; border-bottom: 1px solid #d2d2d2; color: #000; }
.menubar .file { width: 63px; height: 24px; margin: 0 3px 0 1px; background: #5b6378; color: #fff; }
.tab { height: 24px; padding: 0 11px; }
.tab.active { height: 25px; margin-bottom: -1px; padding: 0 10px; border: 1px solid #d2d2d2; border-bottom: 0; background: #fff; color: #5b6378; }
.account { display: flex; align-items: center; gap: 12px; height: 24px; margin-left: auto; padding-right: 8px; color: #333; }
.account button { display: flex; align-items: center; gap: 5px; }
.account svg { color: #5b6378; }
.account .caret { margin: 0 -4px 0 -6px; color: #444; }
.account .upgrade { color: #ff7800; font-weight: 700; }
.account a { color: #00f; text-decoration: none; }

.ribbon { display: flex; height: 92px; border: 1px solid #d2d2d2; border-top: 0; }
.group { display: flex; margin-top: 3px; padding: 0 0 0 6px; }
.group.end, .clip, .spacing { border-right: 1px solid #d2d2d2; }
.group.end { padding: 0 5px 0 9px; }
.group.tight { padding-right: 2px; }
.rule { width: 1px; margin: 8px 0; background: #d2d2d2; }
.clip { display: grid; grid-template-columns: 28px 34px; grid-template-rows: 20px 20px; align-content: start; row-gap: 13px; width: 75px; padding: 15px 0 0 11px; color: #5b6378; }
.paste { display: flex; align-items: center; gap: 3px; }
.cmd { display: flex; flex-direction: column; align-items: center; width: 50px; padding-top: 6px; color: #333; }
.cmd.wide { width: 58px; }
.cmd svg { width: 36px; height: 36px; margin-bottom: 3px; color: #5b6378; }
.cmd svg.inset { width: 33px; height: 33px; margin: 3px 0; }
.cmd .caret { margin-top: 11px; }
.spacing { flex-direction: column; gap: 3px; width: 88px; padding: 5px 11px 0 12px; }
.spin { display: flex; justify-content: space-between; align-items: center; color: #5b6378; }
.box { position: relative; width: 38px; height: 22px; border: 1px solid #b8b8b8; }
.box input { width: 24px; height: 20px; padding: 0 0 0 2px; border: 0; background: none; font: 13px/20px "Noto Sans", sans-serif; color: #333; }
.box::before, .box::after { content: ""; position: absolute; right: 6px; width: 5px; height: 3px; background: #666; }
.box::before { top: 3px; clip-path: polygon(0 100%, 100% 100%, 50% 0); }
.box::after { bottom: 3px; clip-path: polygon(0 0, 100% 0, 50% 100%); }
.reset { display: flex; align-items: center; gap: 4px; height: 22px; color: #333; }

.workspace { flex: 1; display: flex; min-height: 0; }
.editor { flex: 1; display: flex; flex-direction: column; min-width: 0; }
.doctabs { display: flex; height: 25px; margin-right: 17px; padding-top: 1px; border-bottom: 1px solid #e5e5e5; }
.doctab { display: flex; align-items: center; gap: 3px; padding: 0 19px 0 7px; }
.doctab svg { color: #5b6378; }
.doctab button { margin-left: 6px; }
.doctab button svg { color: #444; }
.doctab.active { background: #bdc1cd; }
.stage { flex: 1; display: flex; min-height: 0; }
.canvas { flex: 1; position: relative; overflow: hidden; }
.map { position: absolute; left: 722px; top: 249px; width: 345px; height: 325px; }
.links { position: absolute; inset: 0; }
.node { position: absolute; left: 186px; width: 72px; height: 36px; border: 1px solid #4585b2; border-radius: 4px; background: #f5f8fe; font-size: 16px; line-height: 34px; text-align: center; color: #222; }
.root { left: 1px; top: 135px; width: 124px; height: 57px; border-width: 3px; border-radius: 5px; background: #e8f1fb; font-size: 19px; line-height: 50px; font-weight: 300; }
.n1 { top: 5px; }
.n2 { top: 79px; }
.n3 { top: 153px; }
.n4 { top: 220px; }
.n5 { top: 287px; }
.selection { position: absolute; left: 181px; top: 0; width: 82px; height: 45px; border: 3px solid #6886ff; border-radius: 3px; background: #fff; }
.sub { position: absolute; left: 293px; font-size: 13px; line-height: 18px; color: #222; }
.s1 { top: 73px; }
.s2 { top: 100px; }
.vscroll { display: flex; flex-direction: column; flex: none; width: 17px; background: #ebebeb; }
.vscroll button, .hscroll button { display: grid; place-items: center; flex: none; width: 17px; height: 17px; border: 1px solid #b8b8b8; background: #fff; }
.vtrack { flex: 1; padding-top: 190px; }
.vthumb { height: 66%; max-height: 387px; border: 1px solid #b8b8b8; background: #fff; }
.hscroll { display: flex; height: 17px; margin-right: 17px; background: #ebebeb; }
.htrack { flex: 1; padding: 0 253px 0 242px; }
.hthumb { height: 17px; border: 1px solid #b8b8b8; background: #fff; }
.palette { display: flex; align-items: center; height: 14px; }
.name { width: 27px; padding-left: 1px; line-height: 14px; white-space: nowrap; }
.recent { margin-left: 19px; }
.swatches { display: flex; gap: 1px; height: 13px; }
.swatches i { width: 14px; }
.more { margin-left: 8px; }

.panel { flex: none; width: 352px; display: flex; flex-direction: column; }
.phead { display: flex; justify-content: space-between; align-items: flex-start; height: 40px; padding: 3px 9px 0; color: #5b6378; }
.phead h2 { font-size: 15px; line-height: 20px; color: #333; }
.phead button { padding-top: 5px; }
.pbody { flex: 1; display: flex; }
.side { display: flex; flex-direction: column; flex: none; gap: 20px; width: 37px; padding-left: 4px; border-right: 1px solid #c4c4c4; color: #5b6378; }
.side button { display: grid; place-items: center; width: 30px; height: 30px; }
.side .active { background: #bdc1cd; }
.props { flex: 1; min-width: 0; padding: 7px 17px 0 6px; }
.styles { display: grid; grid-template-columns: repeat(4, 73px); padding: 0 0 11px 18px; border-bottom: 1px dashed #888; }
.styles button, .opts button { display: flex; align-items: center; gap: 5px; color: #5b6378; }
.opts button { gap: 3px; }
.styles .caret, .opts .caret, .fmt .caret { color: #777; }
.props h3 { margin-top: 40px; font-size: 13px; line-height: 20px; font-weight: 500; color: #222; }
.props .styles + h3 { margin-top: 26px; }
.opts { display: grid; grid-template-columns: repeat(4, 74px); grid-auto-rows: 27px; row-gap: 15px; margin-top: 8px; padding-left: 18px; }
.opts.loose { row-gap: 19px; margin-top: 10px; }
.fontrow { display: flex; align-items: center; margin: 6px 0 0 16px; }
.pick { position: relative; height: 26px; }
.family { width: 131px; }
.size { width: 38px; margin-left: -1px; }
.pick select { appearance: none; width: 100%; height: 26px; padding: 0 4px; border: 1px solid #b8b8b8; border-radius: 0; background: #fff; font: inherit; color: #333; }
.size select { padding: 0 2px; font-size: 13px; }
.pick::after { content: ""; position: absolute; right: 6px; top: 11px; width: 5px; height: 3px; background: #666; clip-path: polygon(0 0, 100% 0, 50% 100%); }
.grow { display: flex; width: 26px; height: 18px; padding-left: 7px; font: 700 14px/20px "Liberation Sans", sans-serif; color: #555; }
.grow i { width: 5px; height: 3px; }
.fmt { display: flex; align-items: center; height: 20px; margin: 14px 0 0 16px; font: 14px/20px "Liberation Serif", serif; color: #5b6378; }
.fmt button { display: flex; align-items: center; justify-content: center; gap: 2px; width: 26px; height: 20px; color: #555; }
.fmt svg { color: #5b6378; }
.fmt .strike { font-size: 12px; }
.fmt .al { width: 28px; }
.fmt .hl, .fmt .fc { width: 32px; gap: 5px; }
.fmt .hl span { width: 15px; height: 18px; border-bottom: 5px solid #000; background: #5b6378; color: #fff; font: 11px/12px "Liberation Sans", sans-serif; }
.fmt .fc span { width: 15px; height: 18px; border-bottom: 4px solid #f00; font-weight: 700; line-height: 14px; color: #5b6378; }
.check { display: flex; align-items: center; gap: 5px; margin: 14px 0 0 16px; }
.check input { appearance: none; width: 12px; height: 12px; margin: 0; border: 1px solid #b8b8b8; }

.status { display: flex; align-items: center; height: 31px; padding: 0 14px 0 5px; background: #5b6378; color: #fff; }
.status a { color: inherit; }
.info { margin-left: 20px; }
.zoom { display: flex; align-items: center; gap: 15px; margin-left: auto; color: #eee; }
.zoom input { appearance: none; width: 90px; height: 14px; margin: 0 -10px 0 -8px; background: linear-gradient(#c4c4c4, #c4c4c4) 0 6px / 100% 2px no-repeat; }
.zoom input::-webkit-slider-thumb { appearance: none; width: 6px; height: 13px; background: #f4f4f4; }
.pct { display: flex; align-items: center; gap: 4px; margin: 0 -4px 0 -7px; font: 12px/16px "Liberation Serif", serif; }
.pct .caret { color: #999; }
.dim { color: #9ca3b4; }

.activate { position: absolute; right: 89px; bottom: 48px; width: 200px; font-size: 15px; line-height: 24px; color: #b4b4b4; white-space: nowrap; }
.activate .big { font-size: 20px; line-height: 26px; }
.toast { position: absolute; right: 6px; bottom: 93px; width: 269px; height: 75px; padding: 9px 9px 0 16px; background: #1c202b; box-shadow: 0 0 6px rgba(0, 0, 0, .4); color: #fff; }
.shield { position: absolute; left: 16px; top: -11px; }
.toast .x { position: absolute; right: 7px; top: 7px; color: #8c90a0; }
.msg { padding-left: 57px; font-size: 13px; line-height: 18px; white-space: nowrap; }
.msg em { font-style: normal; color: #ffe11e; }
.act { display: flex; justify-content: space-between; margin-top: 15px; color: #7c808c; }
.act span { padding-top: 3px; }
.act button { width: 72px; height: 20px; background: #00c27c; color: #fff; }
.ime { position: absolute; right: 0; bottom: 88px; display: flex; align-items: center; justify-content: space-between; width: 145px; height: 26px; padding: 0 5px 0 28px; border: 1px solid #b6c8ea; border-radius: 3px; background: #fff; color: #0068d8; }
.ime button { font-size: 15px; font-weight: 700; line-height: 20px; }
.sogou { position: absolute; left: -10px; top: -5px; }
.brand { position: absolute; right: 10px; bottom: 8px; display: flex; opacity: .8; pointer-events: none; }
.brand div { display: flex; flex-direction: column; margin-left: -4px; }
.brand strong { font-size: 21px; line-height: 26px; color: #4f9fe0; }
.brand span { font: 700 16px/18px "Liberation Sans", sans-serif; color: #3f8f5c; }
```
